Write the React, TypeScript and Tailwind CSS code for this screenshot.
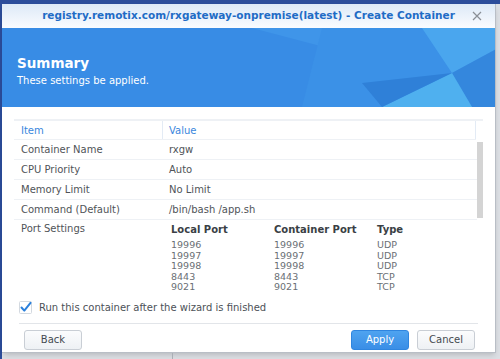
import React from 'react'

const ports = [
  ['19996', '19996', 'UDP'],
  ['19997', '19997', 'UDP'],
  ['19998', '19998', 'UDP'],
  ['8443', '8443', 'TCP'],
  ['9021', '9021', 'TCP'],
]

const rows = [
  ['Container Name', 'rxgw'],
  ['CPU Priority', 'Auto'],
  ['Memory Limit', 'No Limit'],
  ['Command (Default)', '/bin/bash /app.sh'],
]

const HeaderArt = () => (
  <svg className="absolute inset-0" width="496" height="79" viewBox="0 0 496 79" preserveAspectRatio="none">
    <rect width="496" height="79" fill="#388ce5" />
    <polygon points="250,0 496,0 496,30 440,50" fill="#3f95e9" />
    <polygon points="320,0 420,0 450,45 380,79 300,79" fill="#3b91e7" />
    <polygon points="420,0 496,0 496,20 450,45" fill="#4aa6ee" />
    <polygon points="450,45 496,20 496,79 470,79" fill="#3487dd" />
    <polygon points="380,79 450,45 470,79" fill="#4fb0ef" />
    <polygon points="360,55 450,45 380,79" fill="#2f80d8" />
  </svg>
)

export default function App() {
  return (
    <div className="w-[500px] h-[359px] bg-[#dcdfe4] overflow-hidden flex flex-col" style={{ fontFamily: '"DejaVu Sans", Verdana, sans-serif' }}>
      <div className="h-[4px] bg-[#2c4d9b] shrink-0" />
      <div className="flex flex-1 min-h-0">
        <div className="w-[2px] bg-[#2c4d9b] shrink-0" />
        <div className="flex flex-col">
          <div className="w-[494px] h-[349px] bg-white border-r border-b border-[#b9bec6] shadow-md flex flex-col shrink-0">
            <div className="h-[24px] shrink-0 bg-gradient-to-b from-[#dde9f7] to-[#fafcff] relative flex items-center justify-center">
              <span className="text-[#1f6cc6] text-[10.5px] font-bold">registry.remotix.com/rxgateway-onpremise(latest) - Create Container</span>
              <svg className="absolute right-[13px] top-[7px]" width="10" height="10" viewBox="0 0 10 10">
                <path d="M1 1 L9 9 M9 1 L1 9" stroke="#8a8f96" strokeWidth="1.2" />
              </svg>
            </div>
            <div className="h-[79px] shrink-0 relative overflow-hidden">
              <HeaderArt />
              <div className="relative pl-[15px] pt-[24px] text-white">
                <div className="text-[13.5px] font-bold leading-[22px]">Summary</div>
                <div className="text-[10px] leading-[14px]">These settings be applied.</div>
              </div>
            </div>
            <div className="flex-1 px-[12px] pt-[12px] flex flex-col">
              <div className="relative border-t-2 border-[#eef1f5]">
                <div className="flex h-[19px] items-center border-b border-[#eef1f5] text-[10px] text-[#3a87dd] mr-[7px]">
                  <div className="w-[149px] pl-[7px] border-r border-[#e3ebf5] h-full flex items-center">Item</div>
                  <div className="pl-[6px] flex-1 h-full flex items-center border-r border-[#e3ebf5]">Value</div>
                </div>
                <div className="absolute right-[0px] top-[21px] w-[6px] h-[76px] bg-[#d4d4d4]" />
                <div className="mr-[6px]">
                  {rows.map(([k, v]) => (
                    <div key={k} className="flex h-[20px] items-center border-b border-[#eef1f5] text-[10px] text-[#505458]">
                      <div className="w-[149px] pl-[7px]">{k}</div>
                      <div className="pl-[6px]">{v}</div>
                    </div>
                  ))}
                </div>
                <div className="flex text-[10px] text-[#505458] pt-[1px]">
                  <div className="w-[157px] pl-[7px]">Port Settings</div>
                  <div className="flex flex-col">
                    <div className="flex font-bold text-[#3a3f45] h-[14px] items-center mt-[1px]">
                      <div className="w-[103px]">Local Port</div>
                      <div className="w-[103px]">Container Port</div>
                      <div>Type</div>
                    </div>
                    <div className="mt-[4px] text-[9.5px] text-[#6a6f75]">
                      {ports.map(([a, b, c]) => (
                        <div key={a} className="flex h-[10.5px] leading-[10.5px]">
                          <div className="w-[103px]">{a}</div>
                          <div className="w-[103px]">{b}</div>
                          <div>{c}</div>
                        </div>
                      ))}
                    </div>
                  </div>
                </div>
              </div>
              <div className="flex items-center gap-[7px] pl-[5px] mt-[8px] h-[14px]">
                <svg width="13" height="13" viewBox="0 0 13 13">
                  <rect x="0.5" y="0.5" width="12" height="12" rx="1" fill="#fff" stroke="#d3d9e0" />
                  <path d="M2.5 6.5 L5.3 9.6 L11.5 1.8" stroke="#2a80dc" strokeWidth="2" fill="none" strokeLinecap="round" strokeLinejoin="round" />
                </svg>
                <span className="text-[10px] text-[#4c5157]">Run this container after the wizard is finished</span>
              </div>
              <div className="mt-[8px] mx-[5px] border-t border-[#e2e5e9]" />
              <div className="flex items-center mt-[6px] pl-[10px] pr-[8px]">
                <button className="w-[58px] h-[20px] rounded-[3px] border border-[#c9ced5] bg-gradient-to-b from-[#fbfcfd] to-[#eef1f4] text-[10px] text-[#444a50]">Back</button>
                <div className="flex-1" />
                <button className="w-[58px] h-[20px] rounded-[3px] border border-[#2f85df] bg-gradient-to-b from-[#4ea3f0] to-[#3a8ee6] text-[10px] text-white">Apply</button>
                <button className="ml-[8px] w-[58px] h-[20px] rounded-[3px] border border-[#c9ced5] bg-gradient-to-b from-[#fbfcfd] to-[#eef1f4] text-[10px] text-[#444a50]">Cancel</button>
              </div>
            </div>
          </div>
          <div className="flex-1 flex">
            <div className="w-[171px] border-r border-[#a9aeb5]" />
          </div>
        </div>
      </div>
    </div>
  )
}
